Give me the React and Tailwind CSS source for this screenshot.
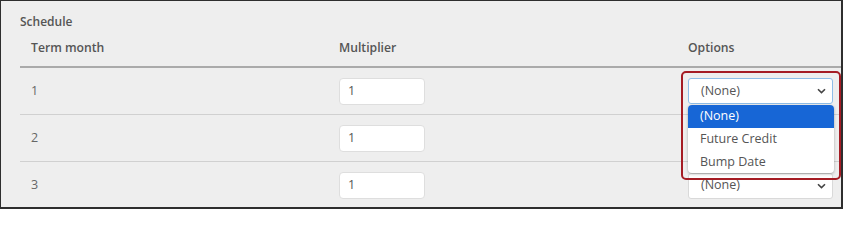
import React from 'react';

const rows = [1, 2, 3];

const Chevron = () => (
  <svg width="9" height="6" viewBox="0 0 9 6" className="absolute right-[6px] top-1/2 -translate-y-1/2">
    <path d="M1 1.2 L4.5 4.6 L8 1.2" fill="none" stroke="#444" strokeWidth="1.6" />
  </svg>
);

const Select = ({ focused }) => (
  <div
    className={`relative w-[145px] h-[26px] rounded-[3px] bg-white flex items-center pl-[12px] text-[12.5px] text-[#555] border ${
      focused ? 'border-[#8ebde8]' : 'border-[#d9d9d9]'
    }`}
  >
    (None)
    <Chevron />
  </div>
);

const App = () => {
  return (
    <div
      className="relative w-[843px] h-[209px] bg-[#eeeeee] border-t border-l border-r-2 border-b-2 border-[#2e2e2e] overflow-hidden"
      style={{ fontFamily: '"Open Sans", "Noto Sans", sans-serif' }}
    >
      <div className="pl-[19px] pt-[12px]">
        <div className="text-[12px] font-semibold text-[#555] leading-[18px]">Schedule</div>
        <div className="flex h-[37px] items-center text-[12.2px] font-semibold text-[#555] border-b-2 border-[#aaaaaa]">
          <div className="w-[309px] pl-[11px]">Term month</div>
          <div className="w-[349px] pl-[10px]">Multiplier</div>
          <div className="pl-[10px]">Options</div>
        </div>
        {rows.map((n, i) => (
          <div
            key={n}
            className={`flex h-[47px] items-center text-[12.5px] text-[#666] ${i < 2 ? 'border-b border-[#d0d0d0]' : ''}`}
          >
            <div className="w-[309px] pl-[11px]">{n}</div>
            <div className="w-[349px] pl-[10px]">
              <div className="w-[86px] h-[27px] rounded-[4px] bg-white border border-[#dedede] flex items-center pl-[8px] text-[#555]">
                1
              </div>
            </div>
            <div className="pl-[10px]">
              <Select focused={i === 0} />
            </div>
          </div>
        ))}
      </div>

      <div className="absolute left-[680px] top-[70px] w-[160px] h-[109px] rounded-[5px] border-2 border-[#a51c24]" />

      <div className="absolute left-[687px] top-[104px] w-[146px] rounded-[4px] bg-white shadow-[0_1px_3px_rgba(0,0,0,0.3)] overflow-hidden text-[12.5px] text-[#555]">
        <div className="h-[23px] bg-[#1766d6] text-white flex items-center pl-[12px]">(None)</div>
        <div className="h-[23px] flex items-center pl-[12px]">Future Credit</div>
        <div className="h-[22px] flex items-center pl-[12px]">Bump Date</div>
      </div>
    </div>
  );
};

export default App;
